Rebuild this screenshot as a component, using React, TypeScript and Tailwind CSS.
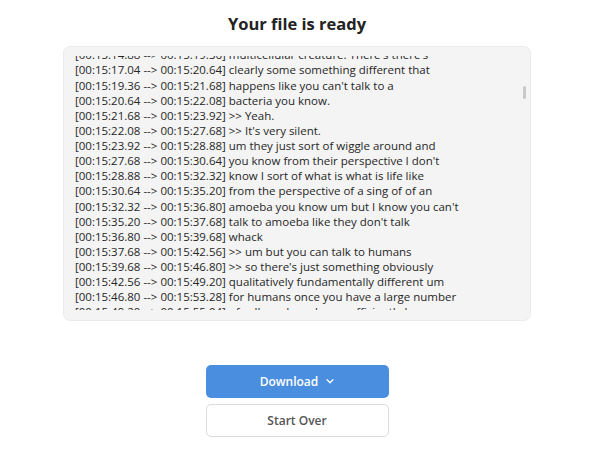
import React, { useEffect, useRef } from "react";

const lines = [
  "[00:15:10.40 --> 00:15:14.88] and and it's not like a single cell",
  "[00:15:12.16 --> 00:15:17.04] it's a multicellular organism it's a",
  "[00:15:14.88 --> 00:15:19.36] multicellular creature. There's there's",
  "[00:15:17.04 --> 00:15:20.64] clearly some something different that",
  "[00:15:19.36 --> 00:15:21.68] happens like you can't talk to a",
  "[00:15:20.64 --> 00:15:22.08] bacteria you know.",
  "[00:15:21.68 --> 00:15:23.92] >> Yeah.",
  "[00:15:22.08 --> 00:15:27.68] >> It's very silent.",
  "[00:15:23.92 --> 00:15:28.88] um they just sort of wiggle around and",
  "[00:15:27.68 --> 00:15:30.64] you know from their perspective I don't",
  "[00:15:28.88 --> 00:15:32.32] know I sort of what is what is life like",
  "[00:15:30.64 --> 00:15:35.20] from the perspective of a sing of of an",
  "[00:15:32.32 --> 00:15:36.80] amoeba you know um but I know you can't",
  "[00:15:35.20 --> 00:15:37.68] talk to amoeba like they don't talk",
  "[00:15:36.80 --> 00:15:39.68] whack",
  "[00:15:37.68 --> 00:15:42.56] >> um but you can talk to humans",
  "[00:15:39.68 --> 00:15:46.80] >> so there's just something obviously",
  "[00:15:42.56 --> 00:15:49.20] qualitatively fundamentally different um",
  "[00:15:46.80 --> 00:15:53.28] for humans once you have a large number",
  "[00:15:49.20 --> 00:15:55.04] of cells and you have sufficiently large",
  "[00:15:53.28 --> 00:15:57.92] brains and you know language emerges",
];

export default function App() {
  const ref = useRef<HTMLDivElement>(null);
  useEffect(() => {
    if (ref.current) ref.current.scrollTop = 39;
  }, []);
  return (
    <div
      className="w-[594px] h-[456px] bg-white flex flex-col items-center"
      style={{ fontFamily: '"Open Sans", "Liberation Sans", sans-serif' }}
    >
      <h1 className="mt-[11px] text-[16.5px] leading-[26px] font-bold text-[#222]">Your file is ready</h1>
      <div className="mt-[9px] w-[468px] h-[275px] rounded-[7px] bg-[#f4f4f4] border border-[#ebebeb] pt-[9px] pb-[10px] pl-[11px] pr-[3px] relative">
        <div
          ref={ref}
          className="h-full overflow-hidden text-[11.5px] leading-[15.13px] text-[#262626] whitespace-pre"
        >
          {lines.map((l, i) => (
            <div key={i}>{l}</div>
          ))}
        </div>
        <div className="absolute right-[4px] top-[39px] w-[3px] h-[13px] rounded-full bg-[#c9c9c9]" />
      </div>
      <button className="mt-[44px] w-[183px] h-[33px] rounded-[5px] bg-[#4a8ee0] text-white text-[12px] font-semibold flex items-center justify-center gap-[8px]">
        Download
        <svg width="8" height="5" viewBox="0 0 9 6" fill="none">
          <path d="M1 1l3.5 3.5L8 1" stroke="white" strokeWidth="1.6" strokeLinecap="round" strokeLinejoin="round" />
        </svg>
      </button>
      <button className="mt-[6px] w-[183px] h-[33px] rounded-[5px] bg-white border border-[#dcdcdc] text-[#555] text-[12px] font-semibold">
        Start Over
      </button>
    </div>
  );
}
